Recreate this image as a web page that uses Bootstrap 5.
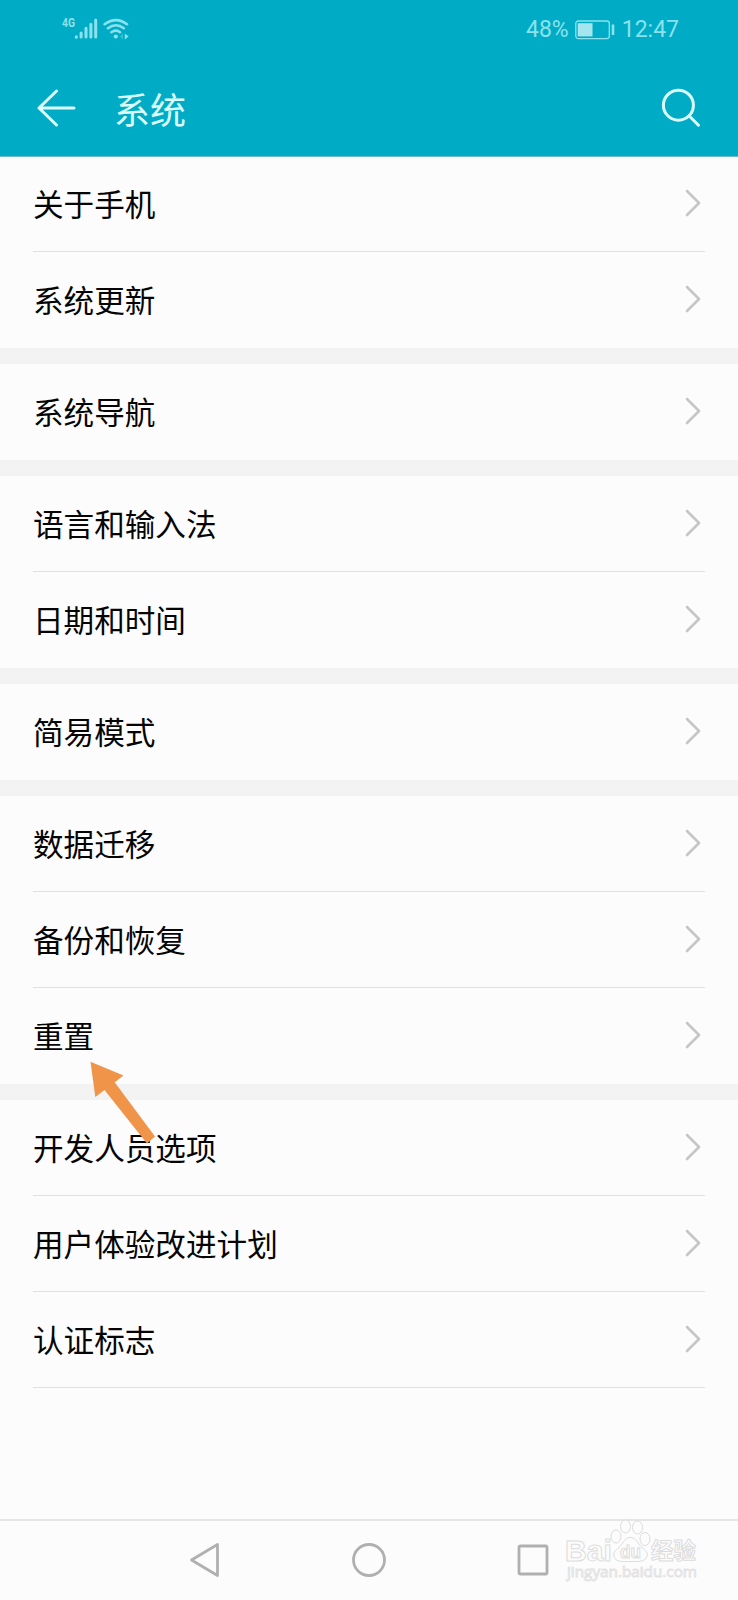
<!DOCTYPE html>
<html lang="zh-CN">
<head>
<meta charset="utf-8">
<meta name="viewport" content="width=device-width, initial-scale=1">
<title>系统</title>
<link href="https://cdn.jsdelivr.net/npm/bootstrap@5.3.0/dist/css/bootstrap.min.css" rel="stylesheet">
<style>
body{font-family:"Noto Sans CJK SC",sans-serif;background:#fcfcfc;color:#050505}
.screen{height:1600px;overflow:hidden}
.top-area{background:#00acc5;height:156px;box-shadow:0 1px #6fbcc8}
.status{height:60px;padding:0 59px 0 62px;font:23px/28px Roboto,sans-serif;color:#8be2ec}
.status-left{margin-top:-2px}
.battery{margin:0 7px 0 6px}
.appbar{height:96px;padding:0 37px 0 37px}
.appbar h1{font-size:36px;line-height:52px;font-weight:400;color:#dcffff;margin:0 0 0 38px}
.group + .group{border-top:16px solid #f3f3f3}
.setting{height:96px;padding:0 4px 2px 0;margin:0 33px;font-size:30.6px;line-height:46px;border-bottom:1px solid transparent;color:inherit;text-decoration:none}
.ruled{border-bottom-color:#e0e0e0}
.softkeys{height:81px;border-top:2px solid #e5e5e5}
.key-row{padding:0 0 2px 189px;gap:131px}
.arrow-mark{left:90px;top:1061px}
.watermark{left:564px;top:1517px}
</style>
</head>
<body>
<svg class="d-none"><symbol id="chev" viewBox="0 0 16 28"><path d="M2 2 14 14 2 26" fill="none" stroke="#c6c6c6" stroke-width="2.6" stroke-linecap="round" stroke-linejoin="round"/></symbol></svg>
<div class="screen position-relative d-flex flex-column">
<header class="top-area">
  <div class="status d-flex align-items-center justify-content-between">
    <svg class="status-left" width="70" height="28" viewBox="0 0 70 28">
      <text x="0" y="12" font-family="Roboto" font-size="12" font-weight="700" textLength="13" lengthAdjust="spacingAndGlyphs" fill="#8be2ec">4G</text>
      <g stroke="#8be2ec" stroke-width="3" stroke-linecap="round"><path d="M14.3 21.8v.4M19.1 18v4M24 13.3V22M28.9 9.2V22M33.700 5V22"/></g>
      <g fill="none" stroke="#8be2ec" stroke-width="2.5" stroke-linecap="round"><path d="M42.600 9.200Q54 1 65 9.200M45.900 13.300Q54 7.200 61.800 13.300M49.400 17.200Q54 14 58 17.200"/></g>
      <circle cx="53.800" cy="21.500" r="2.100" fill="#8be2ec"/><path d="M62.800 18.500v6l3.800-3z" fill="#8be2ec"/><path d="M61 18.500v6l-3-3z" fill="#8be2ec" opacity=".35"/>
    </svg>
    <div class="d-flex align-items-center">
      <span>48%</span>
      <svg class="battery" width="40" height="20" viewBox="0 0 40 20"><rect x=".8" y="1" width="33.500" height="17.600" rx="2.500" fill="none" stroke="#8be2ec" stroke-width="1.300"/><rect x="2.700" y="3.200" width="14.800" height="13.200" fill="#a5e6ee"/><path d="M38 4.500v10.500" stroke="#8be2ec" stroke-width="2.600"/></svg>
      <span>12:47</span>
    </div>
  </div>
  <div class="appbar d-flex align-items-center">
    <svg width="39" height="38" viewBox="0 0 39 38" fill="none" stroke="#dcffff" stroke-width="3" stroke-linecap="round" stroke-linejoin="round"><path d="M19.500 2 2 19l17.500 17M2 19H37"/></svg>
    <h1>系统</h1>
    <svg class="ms-auto" width="40" height="40" viewBox="0 0 40 40" fill="none" stroke="#dcffff" stroke-width="3" stroke-linecap="round"><circle cx="17.400" cy="17.200" r="15"/><path d="m28.500 28.200 9 9"/></svg>
  </div>
</header>
<main class="flex-grow-1">
  <section class="group">
    <a class="setting ruled d-flex align-items-center justify-content-between"><span>关于手机</span><svg width="16" height="28"><use href="#chev"/></svg></a>
    <a class="setting d-flex align-items-center justify-content-between"><span>系统更新</span><svg width="16" height="28"><use href="#chev"/></svg></a>
  </section>
  <section class="group">
    <a class="setting d-flex align-items-center justify-content-between"><span>系统导航</span><svg width="16" height="28"><use href="#chev"/></svg></a>
  </section>
  <section class="group">
    <a class="setting ruled d-flex align-items-center justify-content-between"><span>语言和输入法</span><svg width="16" height="28"><use href="#chev"/></svg></a>
    <a class="setting d-flex align-items-center justify-content-between"><span>日期和时间</span><svg width="16" height="28"><use href="#chev"/></svg></a>
  </section>
  <section class="group">
    <a class="setting d-flex align-items-center justify-content-between"><span>简易模式</span><svg width="16" height="28"><use href="#chev"/></svg></a>
  </section>
  <section class="group">
    <a class="setting ruled d-flex align-items-center justify-content-between"><span>数据迁移</span><svg width="16" height="28"><use href="#chev"/></svg></a>
    <a class="setting ruled d-flex align-items-center justify-content-between"><span>备份和恢复</span><svg width="16" height="28"><use href="#chev"/></svg></a>
    <a class="setting d-flex align-items-center justify-content-between"><span>重置</span><svg width="16" height="28"><use href="#chev"/></svg></a>
  </section>
  <section class="group">
    <a class="setting ruled d-flex align-items-center justify-content-between"><span>开发人员选项</span><svg width="16" height="28"><use href="#chev"/></svg></a>
    <a class="setting ruled d-flex align-items-center justify-content-between"><span>用户体验改进计划</span><svg width="16" height="28"><use href="#chev"/></svg></a>
    <a class="setting ruled d-flex align-items-center justify-content-between"><span>认证标志</span><svg width="16" height="28"><use href="#chev"/></svg></a>
  </section>
</main>
<footer class="softkeys">
  <div class="key-row d-flex align-items-center h-100">
    <svg width="32" height="36" viewBox="0 0 32 36" fill="none" stroke="#b0b0b0" stroke-width="2.800" stroke-linejoin="round"><path d="M2.500 18 28.500 2.500v31z"/></svg>
    <svg width="34" height="36" viewBox="0 0 34 36" fill="none" stroke="#b0b0b0" stroke-width="2.800"><circle cx="17" cy="18" r="15.500"/></svg>
    <svg width="32" height="36" viewBox="0 0 32 36" fill="none" stroke="#b0b0b0" stroke-width="2.800"><rect x="2" y="4" width="28" height="28" rx="1.500"/></svg>
  </div>
</footer>
<svg class="arrow-mark position-absolute" width="68" height="84" viewBox="0 0 68 84"><path d="M.5.700 33.500 14.500 24.700 21.300 65 75.500 57 82.500 14.500 29 5.300 36z" fill="#f0944a"/></svg>
<svg class="watermark position-absolute" width="140" height="66" viewBox="0 0 140 66" fill="#fcfcfc" stroke="#dcdcdc" stroke-width="1">
  <text x="1" y="44" font-family="Liberation Sans" font-weight="700" font-size="30" textLength="47" lengthAdjust="spacingAndGlyphs">Bai</text>
  <ellipse cx="52" cy="19.500" rx="5" ry="6.500"/><ellipse cx="61.500" cy="9.500" rx="5" ry="6.500"/><ellipse cx="73.500" cy="10.500" rx="5" ry="6.500"/><ellipse cx="81" cy="22" rx="5" ry="6.500"/>
  <path d="M66 20.500c7 0 8 7 12 10 4 3 6 5 5 9-2 6-10 5-17 5s-14 1-16-5c-1-4 1-6 5-9s5-10 11-10z"/>
  <text x="56" y="41" font-family="Liberation Sans" font-weight="700" font-size="18" textLength="21" lengthAdjust="spacingAndGlyphs">du</text>
  <text x="87" y="42" font-family="Noto Sans CJK SC" font-weight="700" font-size="23" textLength="45" lengthAdjust="spacingAndGlyphs">经验</text>
  <text x="3" y="60" font-family="Open Sans" font-weight="400" font-size="15" stroke="#e2e2e2" stroke-width=".9" textLength="130" lengthAdjust="spacingAndGlyphs">jingyan.baidu.com</text>
</svg>
</div>
<script src="https://cdn.jsdelivr.net/npm/bootstrap@5.3.0/dist/js/bootstrap.bundle.min.js"></script>
</body>
</html>
